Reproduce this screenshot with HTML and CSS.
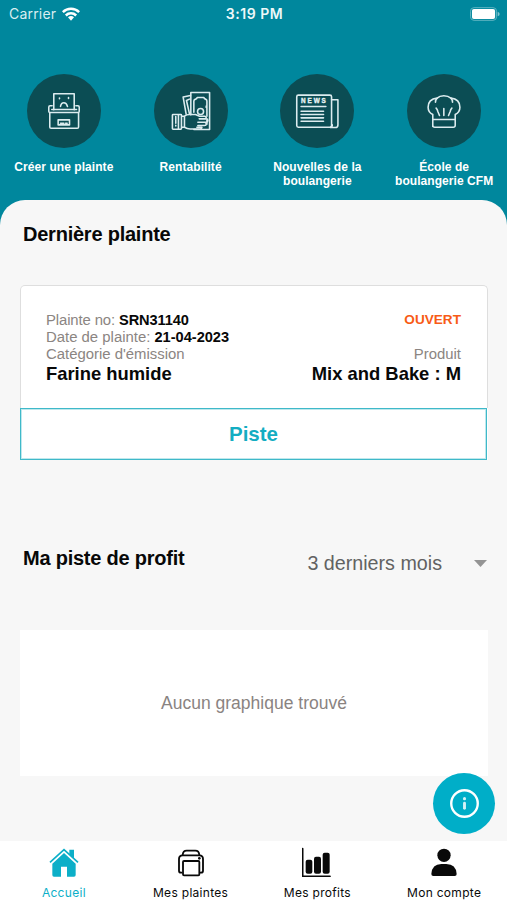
FILE: index.html
```html
<!DOCTYPE html>
<html lang="fr">
<head>
<meta charset="utf-8">
<meta name="viewport" content="width=device-width, initial-scale=1">
<title>Accueil</title>
<link rel="stylesheet" href="styles.css">
</head>
<body>
<div class="app">
  <header class="top">
    <div class="status">
      <div class="carrier"><span>Carrier</span>
        <svg class="wifi" viewBox="0 0 54 42"><path d="M27 41 18 31a13 13 0 0 1 18 0z" fill="#fff"/><g fill="none" stroke="#fff" stroke-width="7.500"><path d="M11.5 25.500a22 22 0 0 1 31 0"/><path d="M2.500 15.500a34.500 34.500 0 0 1 49 0"/></g></svg>
      </div>
      <div class="clock">3:19 PM</div>
      <div class="power"><svg class="battery" viewBox="0 0 92 42"><rect x="1.500" y="1.500" width="80" height="39" rx="11" fill="none" stroke="#5fb4c2" stroke-width="3"/><rect x="6" y="6" width="71" height="30" rx="6" fill="#fff"/><path d="M85 14q6 2 6 7t-6 7z" fill="#7fc3ce"/></svg></div>
    </div>
    <nav class="actions">
      <a class="action">
        <svg class="disc" viewBox="22 27 221 221"><g class="line">
          <path d="M102 134V86h61v48"/><path d="M97 122h-6q-4 0-4 4v12q0 4 4 4h83q4 0 4-4v-12q0-4-4-4h-6"/><path d="M96 133h74"/><path d="M90 143v42q0 4 4 4h78q4 0 4-4v-42"/><rect x="115" y="164" width="34" height="15"/><path d="M122 174h10m5 0h5"/><path d="M122 124q2-11 10-11t11 11"/><path d="M119 99v2m27-4v3"/></g></svg>
        <span>Créer une plainte</span>
      </a>
      <a class="action">
        <svg class="disc" viewBox="24 27 221 221"><g class="line">
          <path d="M134 149V82h56v111h-47"/><path d="M120 147 111 96l22-5M130 102l-9 4 9 40"/><path d="M143 141v-33q0-5 5-6 4-1 5-5h20q1 4 5 5 4 1 4 6v29"/><circle cx="163" cy="139" r="9"/><path d="M180 123v4M182 139v14m0 12v12"/><rect x="79" y="148" width="27" height="44" rx="2"/><path d="M97 149v42M89 154v20m0 6v2"/><path d="M115 153q6-5 15-5h18l12 5h15q5 0 5 4t-5 4h-16M115 153v33q8 5 17 5h29q6 0 6-5h-15M107 186h8M107 153h8M155 171h25q5 0 5-5t-5-5h-20M155 181h20q5 0 5-5t-5-5"/></g></svg>
        <span>Rentabilité</span>
      </a>
      <a class="action">
        <svg class="disc" viewBox="24 27 221 221"><g class="line">
          <rect x="74" y="90" width="104" height="96" rx="5"/><path d="M178 104h19v75q0 8-8 8h-15q6-1 6-8"/><path d="M87 124h74"/><path d="M87 138h67M87 148h67M87 158h67M87 168h67"/></g><text class="news" x="87" y="115" textLength="74" lengthAdjust="spacing">NEWS</text></svg>
        <span>Nouvelles de la<br>boulangerie</span>
      </a>
      <a class="action">
        <svg class="disc" viewBox="24 27 221 221"><g class="line">
          <path d="M101 184v-36q-14-7-14-22 0-24 27-27 7-7 20-7t21 7q27 3 27 27 0 15-14 22v32q0 6-6 6h-55q-6 0-6-6M102 163h65"/><path d="M114 99q-5 5-5 12M155 99q5 5 5 12M134 130v21M111 129q4 4 5 10l5 12M158 129q-4 4-5 10l-5 12"/></g></svg>
        <span>École de<br>boulangerie CFM</span>
      </a>
    </nav>
  </header>

  <main class="sheet">
    <h2 class="title">Dernière plainte</h2>
    <section class="ticket">
      <div class="details">
        <div class="col">
          <p class="number">Plainte no: <b>SRN31140</b></p>
          <p>Date de plainte: <b>21-04-2023</b></p>
          <p>Catégorie d'émission</p>
          <strong>Farine humide</strong>
        </div>
        <div class="col right">
          <p class="state">OUVERT</p>
          <p>Produit</p>
          <strong>Mix and Bake : M</strong>
        </div>
      </div>
      <button class="track">Piste</button>
    </section>
    <div class="profit">
      <h2 class="title profit-title">Ma piste de profit</h2>
      <div class="period"><span>3 derniers mois</span><svg class="caret" viewBox="0 0 13 7"><path d="M0 0h13L6.500 7z" fill="#949494"/></svg></div>
    </div>
    <section class="empty">Aucun graphique trouvé</section>
  </main>

  <button class="info" aria-label="Info"><svg viewBox="0 0 28 28"><circle cx="14" cy="14" r="12.800" fill="none" stroke="#fff" stroke-width="2.300"/><circle cx="14" cy="9.300" r="1.500" fill="#d5f2f6"/><path d="M14 13.800v4.800" stroke="#d5f2f6" stroke-width="2.800" stroke-linecap="round"/></svg></button>

  <nav class="tabs">
    <a class="tab active">
      <svg viewBox="0 0 90 90"><path d="m3 46 42-38 42 38" fill="none" stroke="currentColor" stroke-width="5"/><path d="M61 8h14v28L61 22zM45 18l35 32v34q0 5-5 5H54V59H36v30H15q-5 0-5-5V50z" fill="currentColor"/></svg>
      <span>Accueil</span></a>
    <a class="tab">
      <svg viewBox="0 0 90 90"><g fill="none" stroke="currentColor" stroke-width="5.500" stroke-linejoin="round"><path d="M19 77h-4q-6 0-6-6V36q0-11 11-11h50q11 0 11 11v35q0 6-6 6h-4"/><path d="M20 24q1-13 12-13h26q11 0 12 13"/><rect x="21" y="42" width="49" height="43" rx="3"/></g><circle cx="70" cy="34" r="4" fill="currentColor"/></svg>
      <span>Mes plaintes</span></a>
    <a class="tab">
      <svg viewBox="0 0 90 90"><path d="M2 5v83h82" fill="none" stroke="currentColor" stroke-width="5" stroke-linecap="round" stroke-linejoin="round"/><g fill="currentColor"><rect x="11" y="38" width="20" height="42" rx="6"/><rect x="36" y="29" width="21" height="51" rx="6"/><rect x="62" y="17" width="21" height="63" rx="6"/></g></svg>
      <span>Mes profits</span></a>
    <a class="tab">
      <svg viewBox="0 0 90 90"><g fill="currentColor"><circle cx="45" cy="25" r="20"/><path d="M7 81q2-30 30-30h15q29 0 31 30 0 6-6 6H13q-6 0-6-6z"/></g></svg>
      <span>Mon compte</span></a>
  </nav>
</div>
</body>
</html>
```
FILE: styles.css
```css
* { box-sizing: border-box; }
body { margin: 0; font-family: "Liberation Sans", Arial, sans-serif; background: #f7f7f7; }
p, h2 { margin: 0; }
button { font-family: inherit; border: 0; padding: 0; }
.app { position: relative; width: 507px; height: 900px; display: flex; flex-direction: column; overflow: hidden; background: #f7f7f7; }

.top { background: #00879d; height: 230px; flex: none; color: #fff; }
.status { display: grid; grid-template-columns: 1fr auto 1fr; align-items: center; height: 27px; padding: 0 7px 0 9px; font-family: Inter, sans-serif; font-size: 14px; }
.carrier { display: flex; align-items: center; gap: 6px; color: #d9eef1; letter-spacing: .2px; }
.wifi { width: 18px; height: 14px; }
.clock { font-weight: 600; font-size: 14px; letter-spacing: .55px; color: #edf8f9; }
.power { display: flex; justify-content: flex-end; }
.battery { width: 30px; height: 14px; }

.actions { display: grid; grid-template-columns: repeat(4, 1fr); padding-top: 47px; }
.action { display: flex; flex-direction: column; align-items: center; gap: 12px; font-size: 12px; line-height: 14px; font-weight: 700; text-align: center; white-space: nowrap; padding-left: 1px; }
.disc { width: 74px; height: 74px; border-radius: 50%; background: #0b4d54; display: block; }
.action span { letter-spacing: .06px; }
.line { fill: none; stroke: #dcecef; stroke-width: 4.700; stroke-linejoin: round; stroke-linecap: round; }
.news { font: 700 19px "Liberation Sans", sans-serif; fill: #e7f3f4; stroke: #e7f3f4; stroke-width: 1; }

.sheet { flex: 1; margin-top: -30px; background: #f7f7f7; border-radius: 25px 25px 0 0; padding: 0 19px 0 20px; }
.title { font-size: 20px; line-height: 24px; padding: 22px 0 0 3px; letter-spacing: -.23px; color: #080808; }
.ticket { margin-top: 39px; background: #fff; border-radius: 5px 5px 0 0; width: 468px; }
.details { height: 123px; border: 1px solid #dedede; border-bottom: 0; border-radius: 5px 5px 0 0; padding: 26px 26px 0 25px; display: flex; justify-content: space-between; color: #8b8582; font-size: 14.900px; line-height: 17.200px; }
.col p { white-space: nowrap; }
.col b { color: #080808; font-size: 14.600px; }
.col .number { letter-spacing: -.12px; }
.col strong { display: block; color: #080808; font-size: 18.400px; line-height: 20px; }
.right { text-align: right; }
.right .state { color: #f85b16; font-weight: 700; font-size: 13.600px; line-height: 16px; height: 34.400px; }
.track { display: block; width: 467px; height: 52px; border: 1px solid #3fb9c9; outline: 1px solid #3fb9c955; outline-offset: -2px; background: #fff; color: #13adc2; font-size: 20.500px; font-weight: 700; }
.profit { display: flex; justify-content: space-between; margin-top: 86px; height: 84px; padding-right: 1px; }
.profit-title { padding-top: 0; }
.period { display: flex; gap: 32px; align-items: center; height: 35px; color: #626262; font-size: 19.700px; }
.caret { width: 13px; height: 7px; }
.empty { display: flex; align-items: center; justify-content: center; background: #fff; height: 146px; color: #8a8381; font-size: 17.500px; }

.info { position: absolute; right: 12px; top: 773px; width: 62px; height: 61px; border-radius: 50%; background: #00aec8; display: grid; place-items: center; }
.info svg { width: 29px; height: 29px; }
.tabs { flex: none; height: 59px; display: grid; grid-template-columns: repeat(4, 1fr); background: #fff; }
.tab { display: flex; flex-direction: column; align-items: center; padding: 6px 0 0 1px; gap: 8px; color: #090909; font: 12px/16px Inter, sans-serif; letter-spacing: .3px; white-space: nowrap; }
.tab svg { width: 30px; height: 30px; }
.active { color: #0cafc8; }
```
